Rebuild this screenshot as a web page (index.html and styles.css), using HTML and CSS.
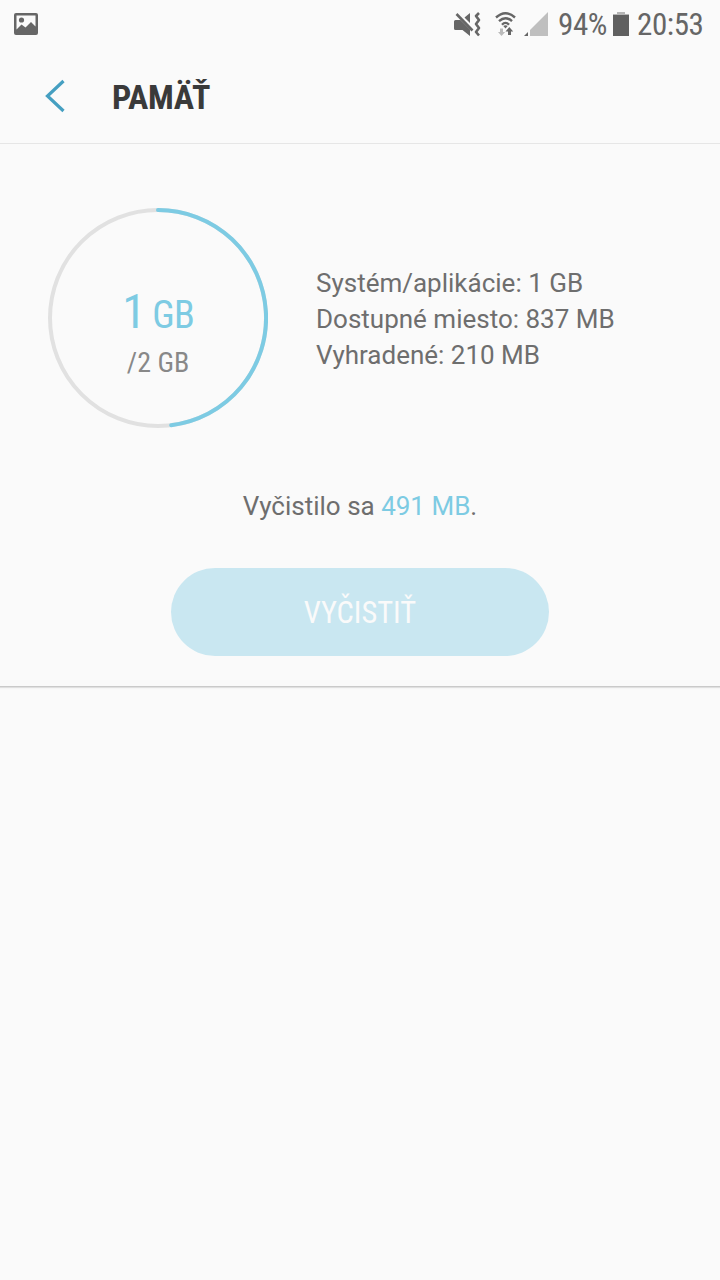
FILE: index.html
```html
<!DOCTYPE html>
<html lang="sk">
<head>
  <meta charset="UTF-8" />
  <title>Pamäť</title>
  <link rel="stylesheet" href="styles.css">
</head>
<body>
  <div class="status-bar">
    <svg class="icon-picture" width="24" height="22" viewBox="0 0 24 22">
      <path fill="#666" fill-rule="evenodd" d="M2 0H22Q24 0 24 2V20Q24 22 22 22H2Q0 22 0 20V2Q0 0 2 0ZM2.500 2.500V16.500L7.500 11.500L11.500 14.500L17 9L21.500 13.500V2.500Z"/>
      <circle cx="7.500" cy="7" r="2.600" fill="#666"/>
    </svg>
    <div class="status-right">
      <svg class="icon-mute" width="28" height="26" viewBox="0 0 28 26">
        <path fill="#666" d="M0 9.500Q0 8 1.500 8H6.500L16 17.500V24L8.500 18H1.500Q0 18 0 16.500ZM10.500 5.500L16 1V11Z"/>
        <path fill="none" stroke="#666" stroke-width="2.600" d="M2.500 2L18.500 18.500"/>
        <path fill="none" stroke="#666" stroke-width="2.600" stroke-linejoin="round" d="M25 1L22 4L25 8L22 12L25 16L22 20L25 23.500"/>
      </svg>
      <svg class="icon-wifi" width="22" height="26" viewBox="0 0 22 26">
        <g fill="none" stroke="#666" stroke-width="2.400">
          <path d="M1 5.500Q10.500 -3 20 5.500"/>
          <path d="M4 9.200Q10.500 3.200 17 9.200"/>
          <path d="M7 12.700Q10.500 9 14 12.700"/>
        </g>
        <path fill="#666" d="M8.300 14Q10.500 12.500 12.700 14L10.500 16.500Z"/>
        <path fill="#bbb" d="M5 16.500H8V20H10.200L6.500 24L3 20H5Z"/>
        <path fill="#666" d="M13 23V19.500H10.500L14.300 15L18.200 19.500H16V23Z"/>
      </svg>
      <svg class="icon-signal" width="24" height="24" viewBox="0 0 24 24">
        <path fill="#bfbfbf" d="M6 18L24 0V24H6Z"/>
        <path fill="#666" d="M0 24L4 20V24Z"/>
      </svg>
      <span class="battery-level"><span class="condensed">94%</span></span>
      <svg class="icon-battery" width="16" height="24" viewBox="0 0 16 24">
        <path fill="#b5b5b5" d="M4 0H12V2H16V4H0V2H4Z"/>
        <path fill="#606060" d="M0 3H16V24H0Z"/>
      </svg>
      <span class="clock"><span class="condensed">20:53</span></span>
    </div>
  </div>

  <div class="header">
    <svg class="icon-back" width="20" height="34" viewBox="0 0 20 34">
      <path fill="none" stroke="#459fc1" stroke-width="3.200" d="M18.500 2L2.500 17L18.500 32"/>
    </svg>
    <h1 class="condensed">PAMÄŤ</h1>
  </div>

  <div class="memory">
    <div class="overview">
      <div class="gauge">
        <svg class="ring" width="220" height="220" viewBox="0 0 220 220">
          <circle cx="110" cy="110" r="108" fill="none" stroke="#e1e1e1" stroke-width="4"/>
          <path fill="none" stroke="#7dcbe3" stroke-width="4" stroke-linecap="round" d="M110 2A108 108 0 0 1 123.200 217.200"/>
        </svg>
        <div class="gauge-text">
          <div class="used condensed">1<span class="unit"> GB</span></div>
          <div class="total condensed">/2 GB</div>
        </div>
      </div>
      <div class="details">
        <div>Systém/aplikácie: 1 GB</div>
        <div>Dostupné miesto: 837 MB</div>
        <div>Vyhradené: 210 MB</div>
      </div>
    </div>
    <p class="result">Vyčistilo sa <span class="amount">491 MB</span>.</p>
    <button class="clean-btn" disabled><span class="condensed">VYČISTIŤ</span></button>
  </div>
</body>
</html>
```
FILE: styles.css
```css
* {
  box-sizing: border-box;
}
body {
  margin: 0;
  height: 1280px;
  background: #fafafa;
  color: #6e6e6e;
  font-family: Roboto, "Liberation Sans", sans-serif;
  overflow: hidden;
}
svg {
  display: block;
  flex: none;
}
.condensed {
  font-family: "Roboto Condensed", Roboto, sans-serif;
  font-stretch: 75%;
  white-space: nowrap;
}
.status-bar {
  display: flex;
  justify-content: space-between;
  align-items: flex-start;
  height: 48px;
  padding: 12px 16px 0 14px;
  color: #666;
}
.icon-picture {
  margin-top: 1px;
}
.status-right {
  display: flex;
  font-size: 31px;
  line-height: 26px;
  letter-spacing: -0.4px;
}
.icon-wifi {
  margin-left: 13px;
}
.icon-signal {
  margin-left: 7px;
}
.battery-level {
  width: 49px;
  margin-left: 10px;
}
.icon-battery {
  margin-left: 6px;
}
.clock {
  width: 67px;
  margin-left: 8px;
}
.header {
  display: flex;
  align-items: center;
  height: 96px;
  padding-left: 45px;
  border-bottom: 1px solid #e6e6e6;
}
.header h1 {
  margin: 2px 0 0 47px;
  font-size: 34px;
  line-height: 40px;
  font-weight: bold;
  letter-spacing: -0.3px;
  color: #3a3a3a;
}
.memory {
  display: flex;
  flex-direction: column;
  align-items: center;
  height: 543px;
  padding-top: 64px;
  border-bottom: 1px solid #cacaca;
  box-shadow: 0 1px 1px #e0e0e0;
}
.overview {
  display: flex;
  align-self: stretch;
  align-items: center;
  padding-left: 48px;
}
.gauge {
  display: grid;
  width: 220px;
  height: 220px;
}
.ring, .gauge-text {
  grid-area: 1 / 1;
}
.gauge-text {
  padding-top: 74px;
  text-align: center;
}
.used {
  font-size: 48px;
  line-height: 60px;
  color: #7dcbe3;
}
.unit {
  font-size: 38px;
  letter-spacing: -0.8px;
  word-spacing: -1.5px;
}
.total {
  margin-top: -2px;
  font-size: 28px;
  line-height: 40px;
  color: #888;
}
.details {
  margin: 2px 0 0 48px;
  font-size: 26px;
  line-height: 36px;
}
.result {
  margin: 60px 0 0;
  font-size: 26px;
  line-height: 36px;
}
.amount {
  color: #7dcbe3;
}
.clean-btn {
  width: 378px;
  height: 88px;
  margin-top: 44px;
  padding: 0;
  border: none;
  border-radius: 44px;
  background: #c9e7f1;
  color: #fafafa;
  font-size: 30.5px;
}
```
